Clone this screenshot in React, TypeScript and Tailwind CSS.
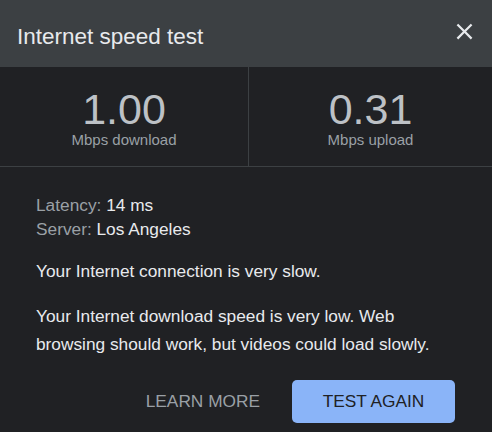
const FONT = "font-['Liberation_Sans',Arial,sans-serif]";

function Stat({ value, label, divider }: { value: string; label: string; divider?: boolean }) {
  return (
    <div
      className={`flex flex-col items-center pt-[22px] ${
        divider ? "w-[249px] border-r border-[#3c4043]" : "flex-1"
      }`}
    >
      <div className="text-[43px] leading-[41px] text-[#bdc1c6]">{value}</div>
      <div className="mt-[1px] text-[15px] leading-[17px] text-[#9aa0a6]">{label}</div>
    </div>
  );
}

export default function App() {
  return (
    <div className={`h-[432px] w-[492px] overflow-hidden bg-[#202124] ${FONT}`}>
      {/* header */}
      <div className="flex h-[67px] items-start justify-between bg-[#3c4043] pl-[17px] pr-[14px]">
        <h1 className="mt-[24px] text-[22.5px] leading-[26px] text-[#e8eaed]">
          Internet speed test
        </h1>
        <button className="mt-[18px] text-[#e8eaed]" aria-label="Close">
          <svg viewBox="0 0 24 24" className="h-[27px] w-[27px]" fill="currentColor">
            <path d="M19 6.41L17.59 5 12 10.59 6.41 5 5 6.41 10.59 12 5 17.59 6.41 19 12 13.41 17.59 19 19 17.59 13.41 12z" />
          </svg>
        </button>
      </div>

      {/* results */}
      <div className="flex h-[100px] border-b border-[#3c4043]">
        <Stat value="1.00" label="Mbps download" divider />
        <Stat value="0.31" label="Mbps upload" />
      </div>

      {/* details */}
      <div className="px-[36px] pt-[26px] text-[17.3px] text-[#e8eaed]">
        <div className="leading-[24px]">
          <div>
            <span className="text-[#9aa0a6]">Latency:</span> 14 ms
          </div>
          <div>
            <span className="text-[#9aa0a6]">Server:</span> Los Angeles
          </div>
        </div>
        <p className="mt-[16px] leading-[28px]">Your Internet connection is very slow.</p>
        <p className="mt-[17px] leading-[28px]">
          Your Internet download speed is very low. Web browsing should work, but videos
          could load slowly.
        </p>
      </div>

      <div className="mt-[22px] flex justify-end gap-[16px] pr-[37px]">
        <button className="h-[43px] px-[16px] text-[17.3px] leading-[43px] text-[#9aa0a6]">
          LEARN MORE
        </button>
        <button className="h-[43px] w-[163px] rounded-[5px] bg-[#8ab4f8] text-[17.3px] leading-[43px] text-[#202124]">
          TEST AGAIN
        </button>
      </div>
    </div>
  );
}
